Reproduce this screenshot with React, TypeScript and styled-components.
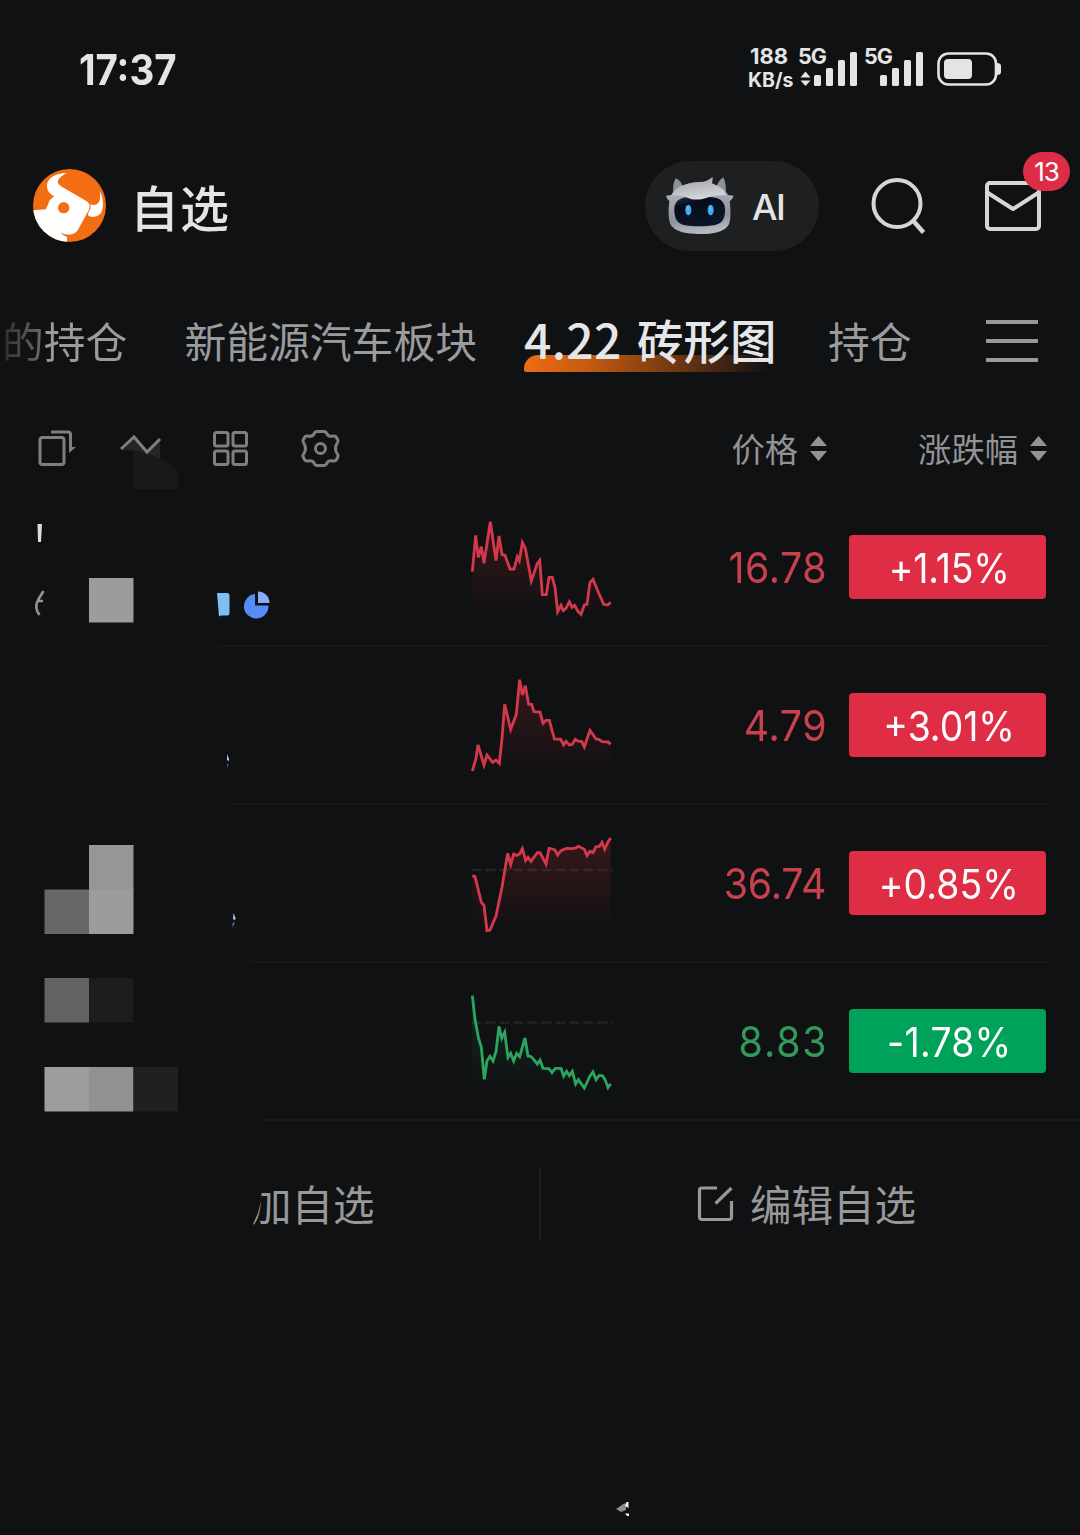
import React from "react";
import styled, { createGlobalStyle } from "styled-components";

const CJK = '"Noto Sans CJK SC", "Noto Sans", sans-serif';
const LATIN = 'Inter, "Noto Sans CJK SC", sans-serif';
const UP = "#c9404f";
const DOWN = "#33995b";

const GlobalStyle = createGlobalStyle`
  *, *::before, *::after { box-sizing: border-box; }
  body { margin: 0; background: #101113; }
  svg { display: block; flex: none; }
`;

const Screen = styled.main`
  width: 1080px;
  height: 1535px;
  overflow: hidden;
  display: flex;
  flex-direction: column;
  background: #101113;
  color: #e4e4e6;
  font-family: ${CJK};
`;

/* ---------- status bar ---------- */

const StatusBar = styled.div`
  height: 138px;
  padding: 0 78px 0 79px;
  display: flex;
  align-items: center;
  justify-content: space-between;
`;

const Clock = styled.div`
  font: 650 42px/50px ${LATIN};
  letter-spacing: 0;
  padding-top: 2px;
  transform: scaleX(0.915);
  transform-origin: left;
`;

const StatusRight = styled.div`
  display: flex;
  align-items: center;
`;

const NetSpeed = styled.div`
  width: 51px;
  display: flex;
  flex-direction: column;
  font-family: ${LATIN};
  font-weight: 700;
  line-height: 24px;
  margin-top: -3px;
`;

const SpeedLine = styled.span<{ $size: number; $spacing: number; $indent?: number }>`
  font-size: ${(p) => p.$size}px;
  letter-spacing: ${(p) => p.$spacing}px;
  padding-left: ${(p) => p.$indent ?? 0}px;
`;

const Signal = styled.div<{ $gap: number }>`
  position: relative;
  margin-right: ${(p) => p.$gap}px;
`;

const Carrier = styled.span`
  position: absolute;
  left: -1px;
  top: -8px;
  font: 700 21.5px/24px ${LATIN};
  letter-spacing: -0.9px;
`;

/* ---------- header ---------- */

const Header = styled.header`
  height: 136px;
  padding: 0 39px 0 33px;
  display: flex;
  align-items: center;
`;

const LogoWrap = styled.div`
  margin-top: -1px;
`;

const Title = styled.h1`
  margin: 0 auto 0 24px;
  font: 500 49px/60px ${CJK};
  letter-spacing: 1px;
  padding-bottom: 1px;
`;

const AiPill = styled.button`
  width: 174px;
  height: 90px;
  margin-right: 52px;
  padding: 0 0 0 20px;
  border: 0;
  border-radius: 45px;
  background: #1e1f20;
  color: inherit;
  display: flex;
  align-items: center;
  gap: 17px;
  font: 450 36px/44px ${LATIN};
  letter-spacing: -1.4px;
`;

const AiLabel = styled.span`
  padding-top: 1px;
`;

const MailButton = styled.div`
  position: relative;
  margin-left: 59px;
`;

const Badge = styled.span`
  position: absolute;
  left: 38px;
  top: -29px;
  width: 47px;
  height: 39px;
  border-radius: 20px;
  background: #dd2d46;
  color: #fff;
  text-align: center;
  font: 400 26px/40px ${LATIN};
  letter-spacing: -1px;
`;

/* ---------- tabs ---------- */

const Tabs = styled.nav`
  height: 130px;
  padding: 0 42px 0 2px;
  display: flex;
  align-items: center;
  color: #9a9b9d;
`;

const Tab = styled.span<{ $gap: number; $faded?: boolean }>`
  font: 400 41.800px/60px ${CJK};
  white-space: pre;
  margin-right: ${(p) => p.$gap}px;
  padding-top: 2px;
  ${(p) =>
    p.$faded &&
    `background: linear-gradient(90deg, #2c2d2f 0, #68696b 40px, #9a9b9d 44px);
     background-clip: text; -webkit-background-clip: text; color: transparent;`}
`;

const ActiveTab = styled.span`
  position: relative;
  z-index: 0;
  width: 252px;
  height: 60px;
  margin-right: 52px;
  font: 500 46.500px/60px ${CJK};
  white-space: pre;
  color: #e6e6e8;
  &::after {
    content: "";
    position: absolute;
    z-index: -1;
    left: 0;
    bottom: -3px;
    width: 250px;
    height: 17px;
    border-radius: 14px 0 0 2px;
    background: linear-gradient(95deg, #ef6c12 0, #c65b12 25%, #6d3611 62%, #101113 98%);
  }
`;

const TabNumber = styled.span`
  font-size: 48px;
  line-height: 1;
  letter-spacing: 0.3px;
  margin-right: 5px;
`;

const MenuIcon = styled.div`
  margin-left: auto;
  padding-top: 4px;
  display: flex;
  flex-direction: column;
  gap: 15px;
  span {
    width: 52px;
    height: 4px;
    background: #97989a;
  }
`;

/* ---------- toolbar ---------- */

const Toolbar = styled.div`
  height: 84px;
  padding: 6px 33px 0 30px;
  display: flex;
  align-items: center;
`;

const ToolGroup = styled.div`
  margin-right: auto;
  padding-top: 16px;
`;

const SortHead = styled.div<{ $gap: number }>`
  display: flex;
  align-items: center;
  gap: 12px;
  margin-top: -2px;
  margin-right: ${(p) => p.$gap}px;
  color: #929395;
  font: 400 33.300px/44px ${CJK};
`;

const SortLabel = styled.span`
  margin-top: -1px;
`;

/* ---------- stock rows ---------- */

const Row = styled.article`
  height: 158px;
  display: flex;
  flex-direction: column;
`;

const RowMain = styled.div`
  height: 158px;
  flex: none;
  padding-right: 34px;
  display: flex;
  align-items: center;
`;

const NameCell = styled.div`
  width: 469px;
  height: 158px;
`;

const Price = styled.span<{ $color: string; $spacing: number }>`
  flex: 1;
  text-align: right;
  color: ${(p) => p.$color};
  font: 400 43px/52px ${LATIN};
  letter-spacing: ${(p) => p.$spacing}px;
  margin-right: ${(p) => 22.5 - p.$spacing}px;
  transform: scaleX(0.915);
  transform-origin: right;
`;

const Change = styled.div<{ $bg: string }>`
  width: 197px;
  height: 64px;
  border-radius: 4px;
  background: ${(p) => p.$bg};
  color: #fff;
  display: flex;
  align-items: center;
  justify-content: center;
`;

const ChangeText = styled.span<{ $spacing: number }>`
  font: 440 41px/52px ${LATIN};
  padding: 1px 0 0 3px;
  letter-spacing: ${(p) => p.$spacing}px;
  transform: scaleX(0.91);
`;

const Divider = styled.hr<{ $left: number; $right: number }>`
  flex: none;
  height: 2px;
  margin: -1px ${(p) => p.$right}px -1px ${(p) => p.$left}px;
  border: 0;
  background: #17181a;
`;

/* ---------- footer ---------- */

const Actions = styled.div`
  height: 168px;
  display: flex;
  align-items: center;
  color: #97989a;
  font: 400 41.500px/60px ${CJK};
`;

const AddAction = styled.div`
  width: 539px;
  padding-left: 250px;
  margin-top: -2px;
  span {
    display: block;
    clip-path: polygon(13px 0, 11px 28px, 8px 40px, 0 58px, 0 60px, 100% 60px, 100% 0);
  }
`;

const Separator = styled.i`
  width: 2px;
  height: 70px;
  background: #1e1f21;
`;

const EditAction = styled.div`
  display: flex;
  align-items: center;
  gap: 16px;
  margin-left: 156px;
`;

const EditLabel = styled.span`
  margin-top: -2px;
`;

const Bottom = styled.div`
  flex: 1;
  display: flex;
  align-items: flex-end;
  padding: 0 0 17px 612px;
`;

/* ---------- drawings ---------- */

const BullLogo = () => (
  <svg width="73" height="73" viewBox="99 447 219 219">
    <defs>
      <clipPath id="disc"><circle cx="208.5" cy="556.5" r="109.5" /></clipPath>
    </defs>
    <g clipPath="url(#disc)">
      <rect x="99" y="447" width="219" height="219" fill="#f36d12" />
      <path fill="#fff" d="M201 459C165 459 143 475 141 494C140 512 150 524 163 528L149 541L138 568L97 571V668H201V651C193 648 186 643 181 636C192 643 204 646 214 643C223 641 229 637 234 629L266 571C271 560 270 550 260 544L183 499C171 491 171 483 179 474C186 467 194 462 201 459Z" />
      <path fill="#fff" d="M299 513C309 532 312 553 306 572C302 584 289 592 273 590C265 589 262 584 265 578L271 566C273 560 272 556 271 552C281 557 291 555 297 546C302 536 301 525 299 513Z" />
      <circle cx="191" cy="563" r="17" fill="#f36d12" />
    </g>
  </svg>
);

const Robot = () => (
  <svg width="70" height="60" viewBox="135 468 210 180">
    <defs>
      <linearGradient id="shell" x1="0" y1="0" x2="0.15" y2="1">
        <stop offset="0" stopColor="#d3d6da" />
        <stop offset="0.3" stopColor="#a6abb3" />
        <stop offset="0.75" stopColor="#8d939c" />
        <stop offset="1" stopColor="#b4b8bf" />
      </linearGradient>
      <linearGradient id="hair" x1="0" y1="0" x2="0.3" y2="1">
        <stop offset="0" stopColor="#9fa1a5" />
        <stop offset="0.6" stopColor="#bcbec2" />
        <stop offset="1" stopColor="#d6d7da" />
      </linearGradient>
      <linearGradient id="visor" x1="0" y1="0" x2="0.5" y2="1">
        <stop offset="0" stopColor="#28344b" />
        <stop offset="0.3" stopColor="#070d1b" />
        <stop offset="1" stopColor="#0c1526" />
      </linearGradient>
    </defs>
    <path fill="#8c9199" d="M160 520C158 500 161 484 168 475C178 480 185 488 188 499L178 522ZM317 520C319 500 316 483 310 472C300 478 294 488 290 499L302 524Z" />
    <path fill="#a9adb4" d="M138 527L160 524L152 546C145 541 140 535 138 527ZM341 527L318 524L326 546C333 541 338 535 341 527Z" />
    <path fill="url(#shell)" d="M238 488C277 487 318 500 327 532C332 556 333 588 329 606C322 635 280 643 239 642C198 642 156 634 149 606C144 587 145 552 151 531C162 500 199 488 238 488Z" />
    <path fill="url(#visor)" d="M238 534C278 526 313 532 315 565C316 594 309 610 286 615C258 620 219 620 191 615C169 609 162 592 163 565C165 532 201 527 238 534Z" />
    <path fill="url(#hair)" d="M158 525C169 502 203 485 240 486C254 486 266 480 278 471C278 479 277 485 276 490C299 499 315 511 317 527C301 524 279 526 261 533C238 541 217 540 203 533C187 526 169 524 158 525Z" />
    <ellipse cx="205" cy="570" rx="9" ry="16" fill="#3caef4" />
    <ellipse cx="272" cy="570" rx="9" ry="16" fill="#3caef4" />
    <ellipse cx="204" cy="565" rx="3" ry="6" fill="#62c0f8" />
    <ellipse cx="271" cy="565" rx="3" ry="6" fill="#62c0f8" />
  </svg>
);

const Bars = ({ arrows }: { arrows?: boolean }) => (
  <svg width="58" height="34" viewBox="0 0 58 34" fill="#e4e4e6">
    <rect x="15" y="23" width="7" height="11" rx="1.6" />
    <rect x="27" y="16" width="7" height="18" rx="1.6" />
    <rect x="39" y="8" width="7" height="26" rx="1.6" />
    <rect x="51" y="0" width="7" height="34" rx="1.6" />
    {arrows && <path d="M6.500 19.500L11.500 25.500H1.500ZM6.500 34L11.500 28.500H1.500Z" />}
  </svg>
);

const SortArrows = () => (
  <svg width="17" height="25" viewBox="0 0 17 25" fill="#929395">
    <path d="M8.500 0L17 10H0ZM8.500 25L17 15H0Z" />
  </svg>
);

const ToolIcons = () => (
  <svg width="330" height="70" viewBox="30 422 330 70" fill="none" stroke="#7e7f81" strokeWidth="3">
    <rect x="40" y="437.500" width="24" height="27" rx="2.500" />
    <path d="M51 432H68Q70.500 432 70.500 434.500V451" />
    <path d="M69 453V447H76Z" fill="#7e7f81" stroke="none" />
    <path d="M121 450L134 437L147 452L160 439V459Q140 449 121 450Z" fill="#242527" stroke="none" />
    <path d="M133 451Q150 453 160 459Q174 465 178 473V489.500H133Z" fill="#18191b" stroke="none" />
    <path d="M121 449L134 437L147 452L160 439" />
    <rect x="214.500" y="432.500" width="13.500" height="13.500" rx="2" />
    <rect x="233" y="432.500" width="13.500" height="13.500" rx="2" />
    <rect x="214.500" y="451" width="13.500" height="13.500" rx="2" />
    <rect x="233" y="451" width="13.500" height="13.500" rx="2" />
    <path strokeLinejoin="round" d="M317 431.500H324Q326 431.500 327 434Q328.500 437 333 436Q335.500 435.500 336.500 437.500L338 440.500Q338.500 442 337 443.500Q334 448.500 337 453.500Q338.500 455 338 456.500L336.500 459.500Q335.500 461.500 333 461Q328.500 460 327 463Q326 465.500 324 465.500H317Q315 465.500 314 463Q312.500 460 308 461Q305.500 461.500 304.500 459.500L303 456.500Q302.500 455 304 453.500Q307 448.500 304 443.500Q302.500 442 303 440.500L304.500 437.500Q305.500 435.500 308 436Q312.500 437 314 434Q315 431.500 317 431.500Z" />
    <circle cx="320.500" cy="448.500" r="5" />
  </svg>
);

interface Stock {
  price: string;
  change: string;
  rising: boolean;
  spacing: [number, number];
  centre: number;
  points: string;
  dashY?: number;
  dividerLeft: number;
  dividerRight: number;
  remnants: React.ReactNode;
}

const stocks: Stock[] = [
  {
    price: "16.78", change: "+1.15%", rising: true, spacing: [0.6, -0.2], centre: 201,
    points: "67,215 77,106 85,172 94,140 102,190 121,65 138,182 147,108 156,163 165,166 180,207 192,207 202,170 208,182 217,128 226,145 244,243 262,190 269,181 277,284 289,284 297,232 307,232 315,262 323,335 333,316 340,332 348,325 358,305 366,322 374,316 384,334 393,343 403,315 411,313 420,247 429,238 446,279 461,313 473,315 482,307",
    dividerLeft: 219, dividerRight: 34,
    remnants: (
      <>
        <path d="M37.500 36H42L41 54H38Z" fill="#dcdcde" />
        <path d="M43.500 103L38 112Q34 120 39.500 127M38.500 113H43" fill="none" stroke="#929395" strokeWidth="2.600" />
        <rect x="89" y="90" width="44.500" height="44.500" fill="#9c9c9e" />
        <path d="M217 105H227Q229.500 105 229.500 107V125Q229.500 127.500 227 127.500H221L219 128.500Z" fill="#7fbef2" />
        <path d="M255 106A12.300 12.300 0 1 0 268.500 117.500H255Z" fill="#568bfa" />
        <path d="M258 103.500A11.500 11.500 0 0 1 269.500 115H258Z" fill="#8aabfb" />
      </>
    ),
  },
  {
    price: "4.79", change: "+3.01%", rising: true, spacing: [0.6, 0], centre: 195,
    points: "67,333 78,295 84,255 102,315 111,285 128,307 138,300 148,310 156,235 164,133 182,208 199,163 209,59 217,105 226,77 236,133 245,133 252,155 270,156 279,190 288,181 298,181 313,237 332,238 341,255 348,244 358,255 367,253 376,238 385,244 395,244 403,261 420,211 438,237 448,239 456,245 474,246 482,253",
    dividerLeft: 231, dividerRight: 34,
    remnants: (
      <>
        <path d="M227 108L229 113V115L227 114Z" fill="#b9c9ee" />
        <path d="M227 118H228.500L227.500 122Z" fill="#4670c7" />
      </>
    ),
  },
  {
    price: "36.74", change: "+0.85%", rising: true, spacing: [-0.2, 0.1], centre: 189,
    points: "67,167 75,170 94,247 102,256 111,332 120,330 138,288 156,202 173,100 182,134 191,102 199,106 209,102 217,86 227,121 234,112 243,124 262,98 270,98 288,132 297,85 307,87 315,90 323,105 332,93 349,85 367,86 377,84 385,79 403,88 411,107 420,94 429,98 438,80 448,79 456,67 464,88 473,67 482,54",
    dashY: 150, dividerLeft: 251, dividerRight: 34,
    remnants: (
      <>
        <rect x="89" y="41" width="44.500" height="45.500" fill="#969698" />
        <rect x="44.500" y="85.500" width="45.500" height="44.500" fill="#666769" />
        <rect x="89" y="85.500" width="44.500" height="44.500" fill="#9c9c9e" />
        <path d="M233.500 109L235.500 114V115.500H233Z" fill="#b9c9ee" />
        <path d="M232.500 119L235 118L232.500 124Z" fill="#4670c7" />
      </>
    ),
  },
  {
    price: "8.83", change: "-1.78%", rising: false, spacing: [2, 0.3], centre: 183,
    points: "67,47 75,118 85,172 94,202 103,298 111,243 120,229 129,243 138,215 147,139 155,175 164,157 174,232 182,220 191,243 200,220 209,230 225,174 234,228 244,230 262,252 270,240 279,265 297,266 306,278 316,265 333,265 341,288 350,274 358,287 367,274 377,312 385,299 403,324 420,288 429,276 438,299 447,287 457,287 465,298 474,323 482,311",
    dashY: 128, dividerLeft: 262, dividerRight: 0,
    remnants: (
      <>
        <rect x="44.500" y="16" width="44.500" height="44.500" fill="#616264" />
        <rect x="89" y="16" width="44.500" height="44.500" fill="#1c1d1f" />
        <rect x="44.500" y="105" width="44.500" height="44.500" fill="#9d9d9f" />
        <rect x="89" y="105" width="44.500" height="44.500" fill="#909193" />
        <rect x="133.500" y="105" width="44.500" height="44.500" fill="#201f21" />
      </>
    ),
  },
];

const Sparkline = ({ stock, id }: { stock: Stock; id: string }) => {
  const color = stock.rising ? "#d4394b" : "#2ba560";
  const fill = stock.rising ? "#c8322f" : "#1f8a4e";
  const floor = stock.centre + 145;
  return (
    <svg width="146" height="120" viewBox={`57 ${stock.centre - 180} 438 360`}>
      <defs>
        <linearGradient id={id} gradientUnits="userSpaceOnUse" x1="0" x2="0" y1={stock.centre - 150} y2={floor}>
          <stop offset="0" stopColor={fill} stopOpacity="0.22" />
          <stop offset="1" stopColor={fill} stopOpacity="0" />
        </linearGradient>
      </defs>
      {stock.dashY && <path d={`M64 ${stock.dashY}H490`} stroke="#232426" strokeWidth="7" strokeDasharray="30 12" />}
      <polygon points={`64,${floor} ${stock.points} 482,${floor}`} fill={`url(#${id})`} />
      <polyline points={stock.points} fill="none" stroke={color} strokeWidth="8.500" strokeLinejoin="miter" />
    </svg>
  );
};

export default function App() {
  return (
    <Screen>
      <GlobalStyle />
      <StatusBar>
        <Clock>17:37</Clock>
        <StatusRight>
          <NetSpeed>
            <SpeedLine $size={22} $spacing={0} $indent={2}>188</SpeedLine>
            <SpeedLine $size={19.5} $spacing={0}>KB/s</SpeedLine>
          </NetSpeed>
          <Signal $gap={8}><Carrier>5G</Carrier><Bars arrows /></Signal>
          <Signal $gap={14}><Carrier>5G</Carrier><Bars /></Signal>
          <svg width="65" height="34" viewBox="0 0 65 34">
            <rect x="1.500" y="1.500" width="57.500" height="31" rx="10" fill="none" stroke="#e4e4e6" strokeWidth="2.600" />
            <rect x="7" y="7" width="28" height="20" rx="4" fill="#e4e4e6" />
            <path d="M60 11Q64 11 64 14V20Q64 23 60 23Z" fill="#e4e4e6" />
          </svg>
        </StatusRight>
      </StatusBar>

      <Header>
        <LogoWrap><BullLogo /></LogoWrap>
        <Title>自选</Title>
        <AiPill><Robot /><AiLabel>AI</AiLabel></AiPill>
        <svg width="55" height="60" viewBox="871 176 55 60" fill="none" stroke="#d6d6d8" strokeWidth="4">
          <circle cx="897" cy="203.500" r="23.500" />
          <path d="M912.500 220L923.500 232.500" strokeWidth="4.500" />
        </svg>
        <MailButton>
          <svg width="56" height="50" viewBox="0 0 56 50" fill="none" stroke="#d6d6d8" strokeWidth="4">
            <rect x="2" y="2" width="52" height="46" rx="3" />
            <path d="M3 12L28 28L53 12" strokeLinejoin="round" />
          </svg>
          <Badge>13</Badge>
        </MailButton>
      </Header>

      <Tabs>
        <Tab $gap={57} $faded>的持仓</Tab>
        <Tab $gap={47}>新能源汽车板块</Tab>
        <ActiveTab><TabNumber>4.22</TabNumber> 砖形图</ActiveTab>
        <Tab $gap={0}>持仓</Tab>
        <MenuIcon><span /><span /><span /></MenuIcon>
      </Tabs>

      <Toolbar>
        <ToolGroup><ToolIcons /></ToolGroup>
        <SortHead $gap={91}><SortLabel>价格</SortLabel><SortArrows /></SortHead>
        <SortHead $gap={0}><SortLabel>涨跌幅</SortLabel><SortArrows /></SortHead>
      </Toolbar>

      {stocks.map((s, i) => (
        <Row key={s.price}>
          <RowMain>
            <NameCell>
              <svg width="300" height="158" viewBox="0 0 300 158">{s.remnants}</svg>
            </NameCell>
            <Sparkline stock={s} id={`fill-${i}`} />
            <Price $color={s.rising ? UP : DOWN} $spacing={s.spacing[0]}>{s.price}</Price>
            <Change $bg={s.rising ? "#df2d46" : "#00a158"}>
              <ChangeText $spacing={s.spacing[1]}>{s.change}</ChangeText>
            </Change>
          </RowMain>
          <Divider $left={s.dividerLeft} $right={s.dividerRight} />
        </Row>
      ))}

      <Actions>
        <AddAction><span>加自选</span></AddAction>
        <Separator />
        <EditAction>
          <svg width="37" height="36" viewBox="697 1186 37 36" fill="none" stroke="#97989a" strokeWidth="3.200">
            <path d="M717 1188H702Q699.500 1188 699.500 1190.500V1217Q699.500 1219.500 702 1219.500H729Q731.500 1219.500 731.500 1217V1201" />
            <path d="M715.500 1203.500L731.500 1188" />
          </svg>
          <EditLabel>编辑自选</EditLabel>
        </EditAction>
      </Actions>

      <Bottom>
        <svg width="20" height="18" viewBox="612 1499 20 18">
          <path d="M616 1508L624 1502.500H626V1509L621 1511Z" fill="#8d8d8d" />
          <path d="M626.500 1501H628.500V1507L625 1505ZM625 1512.500H629V1515H627Z" fill="#f2f2f2" />
        </svg>
      </Bottom>
    </Screen>
  );
}
